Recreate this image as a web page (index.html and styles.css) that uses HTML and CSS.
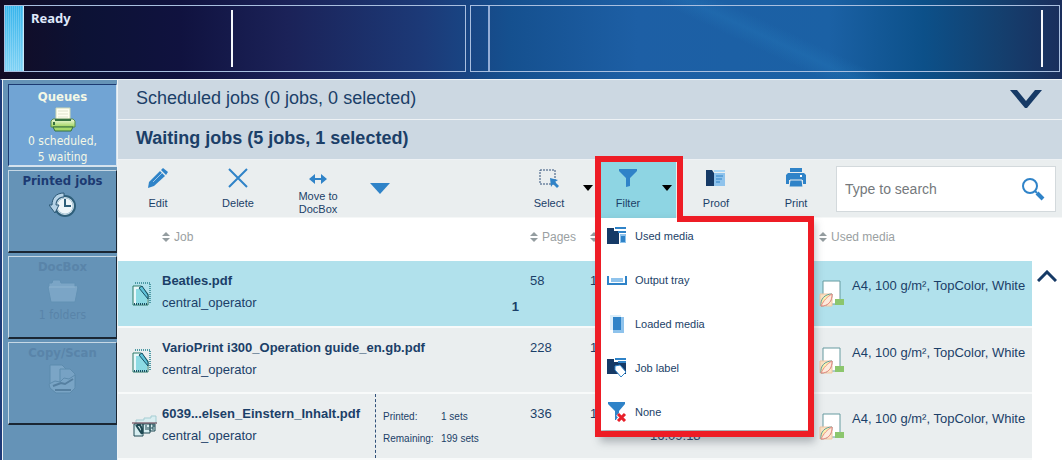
FILE: index.html
```
<!DOCTYPE html>
<html lang="en">
    <head>
        <meta charset="utf-8">
        <title>Queues</title>
        <link rel="stylesheet" href="styles.css">
    </head>
    <body>
        <header class="banner">
            <div class="status">
                <span class="stripes"></span>
                <h1>Ready</h1>
                <span class="divider"></span>
            </div>
            <div class="messages">
                <span class="thin-divider"></span>
                <span class="divider"></span>
            </div>
        </header>

        <div class="page">
            <nav class="sidebar">
                <button class="tab active">
                    <strong>Queues</strong>
                    <svg width="26" height="26" viewBox="0 0 26 26">
                        <defs>
                            <linearGradient id="green" x1="0" y1="0" x2="0" y2="1">
                                <stop offset="0" stop-color="#f2fae0"/>
                                <stop offset="1" stop-color="#9fd45c"/>
                            </linearGradient>
                        </defs>
                        <path d="M6 13V1h14v12z" fill="#fffff0" stroke="#cfd9b5"/>
                        <path d="M8 4h10M8 7h10M8 10h10" stroke="#dfe3cc"/>
                        <path d="M3 12h20l2 2v6H1v-6z" fill="url(#green)" stroke="#5d8f4c"/>
                        <path d="M5 13h16" stroke="#35703f" stroke-width="2"/>
                        <path d="M3 20h20l-2 4H5z" fill="#a6d96a" stroke="#35703f"/>
                        <path d="M4 15v3" stroke="#35703f" stroke-width="2"/>
                    </svg>
                    <span>0 scheduled,<br>5 waiting</span>
                </button>
                <button class="tab">
                    <strong>Printed jobs</strong>
                    <svg width="28" height="26" viewBox="0 0 28 26">
                        <circle cx="16" cy="14" r="10" fill="#dcebf3" stroke="#2f5f7a" stroke-width="2"/>
                        <circle cx="16" cy="14" r="8" fill="#eef6fa" stroke="#a9c6d6"/>
                        <path d="M16 7v7h6" fill="none" stroke="#2f5f7a" stroke-width="2"/>
                        <path d="M15 1C7 1 3 6 3 13H0l6 8 4-8H7c0-5 3-8 8-8z" fill="#b5d2e6" stroke="#2c5876"/>
                    </svg>
                </button>
                <button class="tab" disabled>
                    <strong>DocBox</strong>
                    <svg width="32" height="26" viewBox="0 0 32 26">
                        <path d="M2 5h3l1-3h7l1 3h14v4h3l-3 15H4L1 9h1z" fill="#7ba5c6" stroke="#6291b4"/>
                        <path d="M2 9h28" stroke="#8fb4d0"/>
                    </svg>
                    <span>1 folders</span>
                </button>
                <button class="tab" disabled>
                    <strong>Copy/Scan</strong>
                    <svg width="30" height="30" viewBox="0 0 30 30">
                        <path d="M2 1h12l4 4v16H2z" fill="#7ba5c6" stroke="#5d8bad"/>
                        <path d="M12 5h10l5 5v12H12z" fill="#77a2c4" stroke="#5d8bad"/>
                        <path d="M1 20l6-3 5 1 4-4 5 1 6-4v13l-5 5H8l-6-5z" fill="#79a4c5" stroke="#5d8bad"/>
                        <path d="M5 22l8-3 4 1 8-5M7 26h16" fill="none" stroke="#557fa0" stroke-width="2"/>
                    </svg>
                </button>
            </nav>

            <main>
                <section class="section-bar">
                    <h2>Scheduled jobs (0 jobs, 0 selected)</h2>
                    <button aria-label="Show scheduled jobs">
                        <svg width="32" height="18" viewBox="0 0 32 18">
                            <path d="M0 0h7l9 11L25 0h7L17 18h-2z" fill="#163a66"/>
                        </svg>
                    </button>
                </section>
                <section class="section-bar open">
                    <h2>Waiting jobs (5 jobs, 1 selected)</h2>
                </section>

                <div class="toolbar">
                    <button class="tool">
                        <svg width="20" height="20" viewBox="0 0 20 20">
                            <path d="M0 20l1-6L12 3l5 5L6 18z" fill="#2f83c8"/>
                            <path d="M13 2l2-2 5 4-2 3z" fill="#2f83c8"/>
                            <path d="M5 14l9-9" stroke="#9cc8ea"/>
                        </svg>
                        Edit
                    </button>
                    <button class="tool">
                        <svg width="20" height="20" viewBox="0 0 20 20">
                            <path d="M1 1l18 18M19 1L1 19" stroke="#2f83c8" stroke-width="2"/>
                        </svg>
                        Delete
                    </button>
                    <button class="tool two-lines">
                        <svg width="18" height="10" viewBox="0 0 18 10">
                            <path d="M0 5l6-5v4h6V0l6 5-6 5V6H6v4z" fill="#2f83c8"/>
                        </svg>
                        Move to<br>DocBox
                    </button>
                    <button class="more" aria-label="More actions">
                        <svg width="20" height="11" viewBox="0 0 20 11">
                            <path d="M0 0h20L10 11z" fill="#2f83c8"/>
                        </svg>
                    </button>

                    <div class="spacer"></div>

                    <button class="tool split">
                        <span>
                            <svg width="20" height="20" viewBox="0 0 20 20">
                                <path d="M1 2h15v14H1z" fill="none" stroke="#31517a" stroke-dasharray="2 1"/>
                                <path d="M11 10l8 2-3 2 4 4-2 2-4-4-2 3z" fill="#2f83c8"/>
                            </svg>
                            Select
                        </span>
                        <svg class="caret" width="10" height="6" viewBox="0 0 10 6"><path d="M0 0h10L5 6z"/></svg>
                    </button>
                    <div class="filter">
                        <button class="tool split" aria-expanded="true">
                            <span>
                                <svg width="18" height="20" viewBox="0 0 18 20">
                                    <path d="M0 1h18v2l-7 7v8l-4 1v-9L0 3z" fill="#2f83c8"/>
                                </svg>
                                Filter
                            </span>
                            <svg class="caret" width="10" height="6" viewBox="0 0 10 6"><path d="M0 0h10L5 6z"/></svg>
                        </button>
                        <div class="menu">
                            <button>
                                <svg width="20" height="18" viewBox="0 0 20 18">
                                    <path d="M0 1h7v3h5v13H0z" fill="#163a66"/>
                                    <path d="M8 1h11M11 5h8" stroke="#2f83c8" stroke-width="2"/>
                                    <path d="M13 7h6v9h-6z" fill="#8fc3ec"/>
                                    <path d="M14 9h4v6h-4z" fill="#2f83c8"/>
                                </svg>
                                Used media
                            </button>
                            <button>
                                <svg width="20" height="18" viewBox="0 0 20 18">
                                    <path d="M1 5v8h18V5" fill="none" stroke="#2f83c8" stroke-width="2"/>
                                    <path d="M4 7h12v4H4z" fill="#8fc3ec"/>
                                </svg>
                                Output tray
                            </button>
                            <button>
                                <svg width="20" height="18" viewBox="0 0 20 18">
                                    <path d="M3 0h11v15H3z" fill="#dbeefa"/>
                                    <path d="M6 2h11v16H6z" fill="#8fc3ec"/>
                                    <path d="M6 2h8v13H6z" fill="#2f83c8"/>
                                </svg>
                                Loaded media
                            </button>
                            <button>
                                <svg width="20" height="20" viewBox="0 0 20 20">
                                    <path d="M0 1h7v3h12v12H0z" fill="#163a66"/>
                                    <path d="M8 1h11M11 4h8" stroke="#2f83c8" stroke-width="2"/>
                                    <path d="M8 8l5-1 6 7-5 5-6-7z" fill="#fff" stroke="#2f83c8"/>
                                </svg>
                                Job label
                            </button>
                            <button>
                                <svg width="20" height="20" viewBox="0 0 20 20">
                                    <path d="M1 0h17v2l-6 7v5l-3 4H8V9L1 2z" fill="#2f83c8"/>
                                    <path d="M11 12l7 7M18 12l-7 7" stroke="#fff" stroke-width="5"/>
                                    <path d="M11 12l7 7M18 12l-7 7" stroke="#e8202a" stroke-width="3"/>
                                </svg>
                                None
                            </button>
                        </div>
                        <svg class="highlight" width="219" height="281" viewBox="0 0 219 281">
                            <path d="M3 3H85V63H216V278H3z" fill="none" stroke="#ee1c25" stroke-width="6"/>
                        </svg>
                    </div>
                    <button class="tool">
                        <svg width="20" height="20" viewBox="0 0 20 20">
                            <path d="M0 2h6l2 3v13H0z" fill="#163a66"/>
                            <path d="M8 3h11" stroke="#a9d6f5" stroke-width="2"/>
                            <path d="M8 5h11v13H8z" fill="#8fc3ec"/>
                            <path d="M10 8h7M10 11h6M10 14h4" stroke="#2f83c8"/>
                        </svg>
                        Proof
                    </button>
                    <button class="tool">
                        <svg width="20" height="20" viewBox="0 0 20 20">
                            <path d="M4 0h12v4H4z" fill="#2f83c8"/>
                            <path d="M2 5h16l2 2v9h-3v-4H3v4H0V7z" fill="#2f83c8"/>
                            <path d="M4 12h12l1 7H3z" fill="#2f83c8" stroke="#eaeeef"/>
                            <path d="M14 8h2" stroke="#fff" stroke-width="2"/>
                        </svg>
                        Print
                    </button>
                    <label class="search">
                        <input type="text" placeholder="Type to search" aria-label="Search jobs">
                        <svg width="24" height="24" viewBox="0 0 24 24">
                            <circle cx="9" cy="9" r="7" fill="none" stroke="#2f83c8" stroke-width="2"/>
                            <path d="M14 14l2 2" stroke="#2f83c8" stroke-width="2"/>
                            <path d="M16 16l6 6" stroke="#2f83c8" stroke-width="4"/>
                        </svg>
                    </label>
                </div>

                <div class="list">
                    <table>
                        <colgroup>
                            <col class="col-icon">
                            <col>
                            <col class="col-pages">
                            <col class="col-date">
                            <col class="col-media">
                        </colgroup>
                        <thead>
                            <tr>
                                <th></th>
                                <th><i class="sort"></i>Job</th>
                                <th><i class="sort"></i>Pages</th>
                                <th><i class="sort"></i></th>
                                <th><i class="sort"></i>Used media</th>
                            </tr>
                        </thead>
                        <tbody id="jobs"></tbody>
                    </table>
                    <button class="scroll-up" aria-label="Scroll up">
                        <svg width="20" height="12" viewBox="0 0 20 12">
                            <path d="M1 11l9-9 9 9" fill="none" stroke="#163a66" stroke-width="3"/>
                        </svg>
                    </button>
                </div>
            </main>
        </div>

        <script>
            const documentIcon = `
                <svg width="20" height="24" viewBox="0 0 20 24">
                    <path d="M3 1h15v20" fill="none" stroke="#4d9aa5" stroke-width="2" stroke-dasharray="1 1"/>
                    <path d="M1 4h8l7 8v11H1z" fill="#e8f8fa" stroke="#2c7a68"/>
                    <path d="M4 7h4l7 7v8H4z" fill="#8ddbe4"/>
                    <path d="M7 6l3-2 6 9v4z" fill="#5fc3d9" stroke="#174f63"/>
                    <path d="M2 22h14" stroke="#174f63" stroke-width="2" stroke-dasharray="1 1"/>
                </svg>`;

            const setsIcon = `
                <svg width="26" height="24" viewBox="0 0 26 24">
                    <path d="M4 9V5h8V3h7V1h5v8" fill="#d9eef1" stroke="#a5cdd3"/>
                    <path d="M2 9h9v12H2zM11 9h7v9h-7zM18 9h5v7h-5z" fill="#d7eef1" stroke="#1e4852"/>
                    <path d="M4 10l6 9M5 10h3l2 4v5" fill="none" stroke="#1e4852" stroke-width="2"/>
                    <path d="M14 10v5M16 12v3M20 10h2v2h-2v2h2" fill="none" stroke="#1e4852"/>
                    <path d="M0 8h25" stroke="#5a2f3f" stroke-width="1"/>
                </svg>`;

            const mediaIcon = `
                <svg width="26" height="28" viewBox="0 0 26 28">
                    <path d="M4 2h17v23H4z" fill="#fff" stroke="#679ba0"/>
                    <path d="M1 15h12v12H1z" fill="#fbe3c4" stroke="#f3c7a4"/>
                    <path d="M2 27C1 20 6 15 13 15c0 8-4 12-11 12z" fill="#fdf3b0" stroke="#5e9c9c"/>
                    <path d="M2 27C5 21 8 18 13 15c0 8-4 12-11 12z" fill="#fdebdc" stroke="#ef8d84"/>
                    <path d="M16 20h9v6h-9z" fill="#8cc66d"/>
                </svg>`;

            const jobs = [
                { name: "Beatles.pdf", pages: 58, copies: "1", date: "16", selected: true },
                { name: "VarioPrint i300_Operation guide_en.gb.pdf", pages: 228, date: "16" },
                { name: "6039...elsen_Einstern_Inhalt.pdf", pages: 336, date: "16", time: "16:09:18", printed: "1 sets", remaining: "199 sets" }
            ];

            document.getElementById("jobs").innerHTML = jobs.map(job => `
                <tr class="${job.selected ? "selected" : ""}">
                    <td class="icon">${job.printed ? setsIcon : documentIcon}</td>
                    <td>
                        <div class="job">
                            <div class="name"><b>${job.name}</b><br>central_operator</div>
                            ${job.printed ? `
                            <dl class="sets">
                                <dt>Printed:</dt><dd>${job.printed}</dd>
                                <dt>Remaining:</dt><dd>${job.remaining}</dd>
                            </dl>` : ""}
                            ${job.copies ? `<b class="copies">${job.copies}</b>` : ""}
                        </div>
                    </td>
                    <td>${job.pages}</td>
                    <td>${job.date}${job.time ? `<div class="time">${job.time}</div>` : ""}</td>
                    <td><div class="media">${mediaIcon}<span>A4, 100 g/m², TopColor, White</span></div></td>
                </tr>
            `).join("");
        </script>
    </body>
</html>
```

FILE: styles.css
```
*{
    box-sizing: border-box;
}
body{
    margin:0;
    height:100vh;
    display:flex;
    flex-direction: column;
    overflow:hidden;
    font-family: "Liberation Sans", Arial, sans-serif;
    font-size:13px;
    color:#1b3f68;
}
h1, h2, dl, dd{
    margin:0;
}
button{
    padding:0;
    border:0;
    background:none;
    font:inherit;
    color:inherit;
}
svg{
    display:block;
    flex:none;
}

/* Top banner */
.banner{
    display:grid;
    grid-template-columns: 462fr 590fr;
    gap:4px;
    flex:none;
    height:79px;
    padding:5px 2px 7px 4px;
    background:
        linear-gradient(25deg, transparent 46%, rgba(40, 130, 195, .25) 52%, transparent 58%) 560px 0 / 400px 100% no-repeat,
        linear-gradient(90deg, #120c25 0%, #0c1235 8%, #10123f 17%, #1b2258 27%, #1c3a78 40%, #15508f 48%, #1d5fa5 60%, #1b61a5 78%, #0c5089 87%, #14406f 94%, #1a2e5c 100%);
}
.status, .messages{
    display:flex;
    border:1px solid #a9bfe0;
}
.messages{
    justify-content: space-between;
    padding:0 16px 0 17px;
}
.stripes{
    width:19px;
    background:
        repeating-linear-gradient(90deg, transparent 0 1px, rgba(255, 255, 255, .2) 1px 2px),
        linear-gradient(#35b4ec, #7fd2f5);
    border-right:1px solid #c8e8f8;
}
h1{
    width:207px;
    padding:2px 7px;
    font-family: "Noto Sans", sans-serif;
    font-size:13px;
    line-height:20px;
    color:#dfe8fa;
}
.divider{
    width:2px;
    margin:4px 0;
    background:#f4f7fc;
}
.thin-divider{
    width:2px;
    background:#93add6;
}

.page{
    flex:1;
    display:flex;
    min-height:0;
    border-left:2px solid #1e3a78;
    border-top:1px solid #eef3f6;
}

/* Tabs on the left */
.sidebar{
    flex:none;
    display:flex;
    flex-direction: column;
    gap:3px;
    width:116px;
    padding:4px 0 0 5px;
    background:#6593b7;
    border:solid #eef3f6;
    border-width:0 1px;
    font-family: "DejaVu Sans Condensed", "DejaVu Sans", sans-serif;
    font-size:12px;
    line-height:16px;
}
.tab{
    display:flex;
    flex-direction: column;
    align-items: center;
    height:83px;
    padding-top:2px;
    border:1px solid;
    border-color:#c6d8e5 #1a2633 #1a2633 #c6d8e5;
    border-bottom-width:2px;
    color:#1c3a72;
}
.tab strong{
    font-size:13px;
}
.tab svg{
    margin:3px 0;
}
.tab.active{
    padding-top:4px;
    background:#71a4d4;
    border-color:#1c3a72 #d5e3ee #d5e3ee #1c3a72;
    color:#f4f8e6;
}
.tab.active svg{
    margin:2px 0 0;
}
.tab:disabled{
    color:#5984a9;
}

main{
    flex:1;
    min-width:0;
    display:flex;
    flex-direction: column;
}
.section-bar{
    display:flex;
    justify-content: space-between;
    align-items: center;
    flex:none;
    height:40px;
    padding:0 20px 2px 18px;
    background:#ccd8e2;
    border-bottom:1px solid #eef2f5;
}
h2{
    font-size:18px;
    font-weight: normal;
}
.open h2{
    font-weight: bold;
}

/* Toolbar */
.toolbar{
    display:flex;
    flex:none;
    height:58px;
    padding-right:6px;
    background:#eaeeef;
    border-bottom:1px solid #f5f7f7;
}
.tool{
    width:80px;
    padding-top:8px;
    line-height:13px;
    display:flex;
    flex-direction: column;
    align-items: center;
    font-size:11px;
}
.tool svg{
    margin-bottom:9px;
}
.two-lines{
    display:block;
    padding-top:12px;
}
.two-lines svg{
    margin:0 auto 6px;
}
.more{
    width:44px;
    display:flex;
    justify-content: center;
    align-items: center;
}
.spacer{
    flex:1;
}
.split{
    flex-direction: row;
    align-items: flex-start;
    gap:7px;
    width:79px;
}
.split span{
    width:54px;
    display:flex;
    flex-direction: column;
    align-items: center;
}
.tool .caret{
    margin-top:17px;
}
.filter{
    position:relative;
}
.filter .split{
    width:75px;
    height:58px;
    background:#8ed5e3;
}
.menu{
    position:absolute;
    top:58px;
    left:0;
    z-index:1;
    width:207px;
    display:flex;
    flex-direction: column;
    gap:8px;
    background:#fff;
    box-shadow:3px 8px 8px 4px rgba(60, 70, 80, .35);
}
.menu button{
    display:flex;
    align-items: center;
    gap:8px;
    height:36px;
    padding-left:6px;
    font-size:11px;
}
.highlight{
    position:absolute;
    top:-4px;
    left:-6px;
    z-index:2;
    pointer-events:none;
}
.search{
    display:flex;
    align-items: center;
    width:220px;
    height:46px;
    margin-top:6px;
    padding:0 10px 0 8px;
    background:#fff;
    border:1px solid #d3d9dc;
}
.search input{
    flex:1;
    min-width:0;
    padding:0;
    border:0;
    outline:0;
    font:14px "Liberation Sans", Arial, sans-serif;
}
.search input::placeholder{
    color:#75797c;
}

/* Job list */
.list{
    display:flex;
    align-items: flex-start;
    background:#fff;
}
table{
    flex:1;
    table-layout: fixed;
    border-collapse: collapse;
}
.col-icon{
    width:44px;
}
.col-pages{
    width:60px;
}
.col-date{
    width:229px;
}
.col-media{
    width:213px;
}
th{
    height:43px;
    padding:0 0 5px;
    text-align: left;
    font-weight: normal;
    font-size:12px;
    color:#9a9fa2;
}
.sort{
    display:inline-block;
    width:8px;
    height:10px;
    margin-right:4px;
    vertical-align: -1px;
    background:#949da0;
    clip-path: polygon(50% 0, 100% 40%, 0 40%, 0 60%, 100% 60%, 50% 100%, 0 60%, 0 40%);
}
td{
    height:66px;
    padding:9px 0 0;
    vertical-align: top;
    line-height:22px;
    background:#eaeeef;
    border-bottom:2px solid #f8fafa;
}
.selected td{
    background:#b1e1ec;
}
.icon svg{
    margin:12px auto 0 14px;
}
.job{
    display:flex;
    height:55px;
}
.name{
    flex:1;
    white-space: nowrap;
}
.copies{
    padding:26px 11px 0 0;
}
.sets{
    display:grid;
    grid-template-columns: 58px 1fr;
    align-content: start;
    width:155px;
    margin-top:-9px;
    padding:12px 0 0 7px;
    border-left:1px dashed #31517a;
    font-size:10px;
}
.time{
    padding-left:60px;
}
.media{
    display:flex;
    gap:7px;
    white-space: nowrap;
}
.media svg{
    margin-top:9px;
}
.media span{
    margin-top:5px;
}
.scroll-up{
    width:30px;
    padding:52px 5px 0;
}
```
